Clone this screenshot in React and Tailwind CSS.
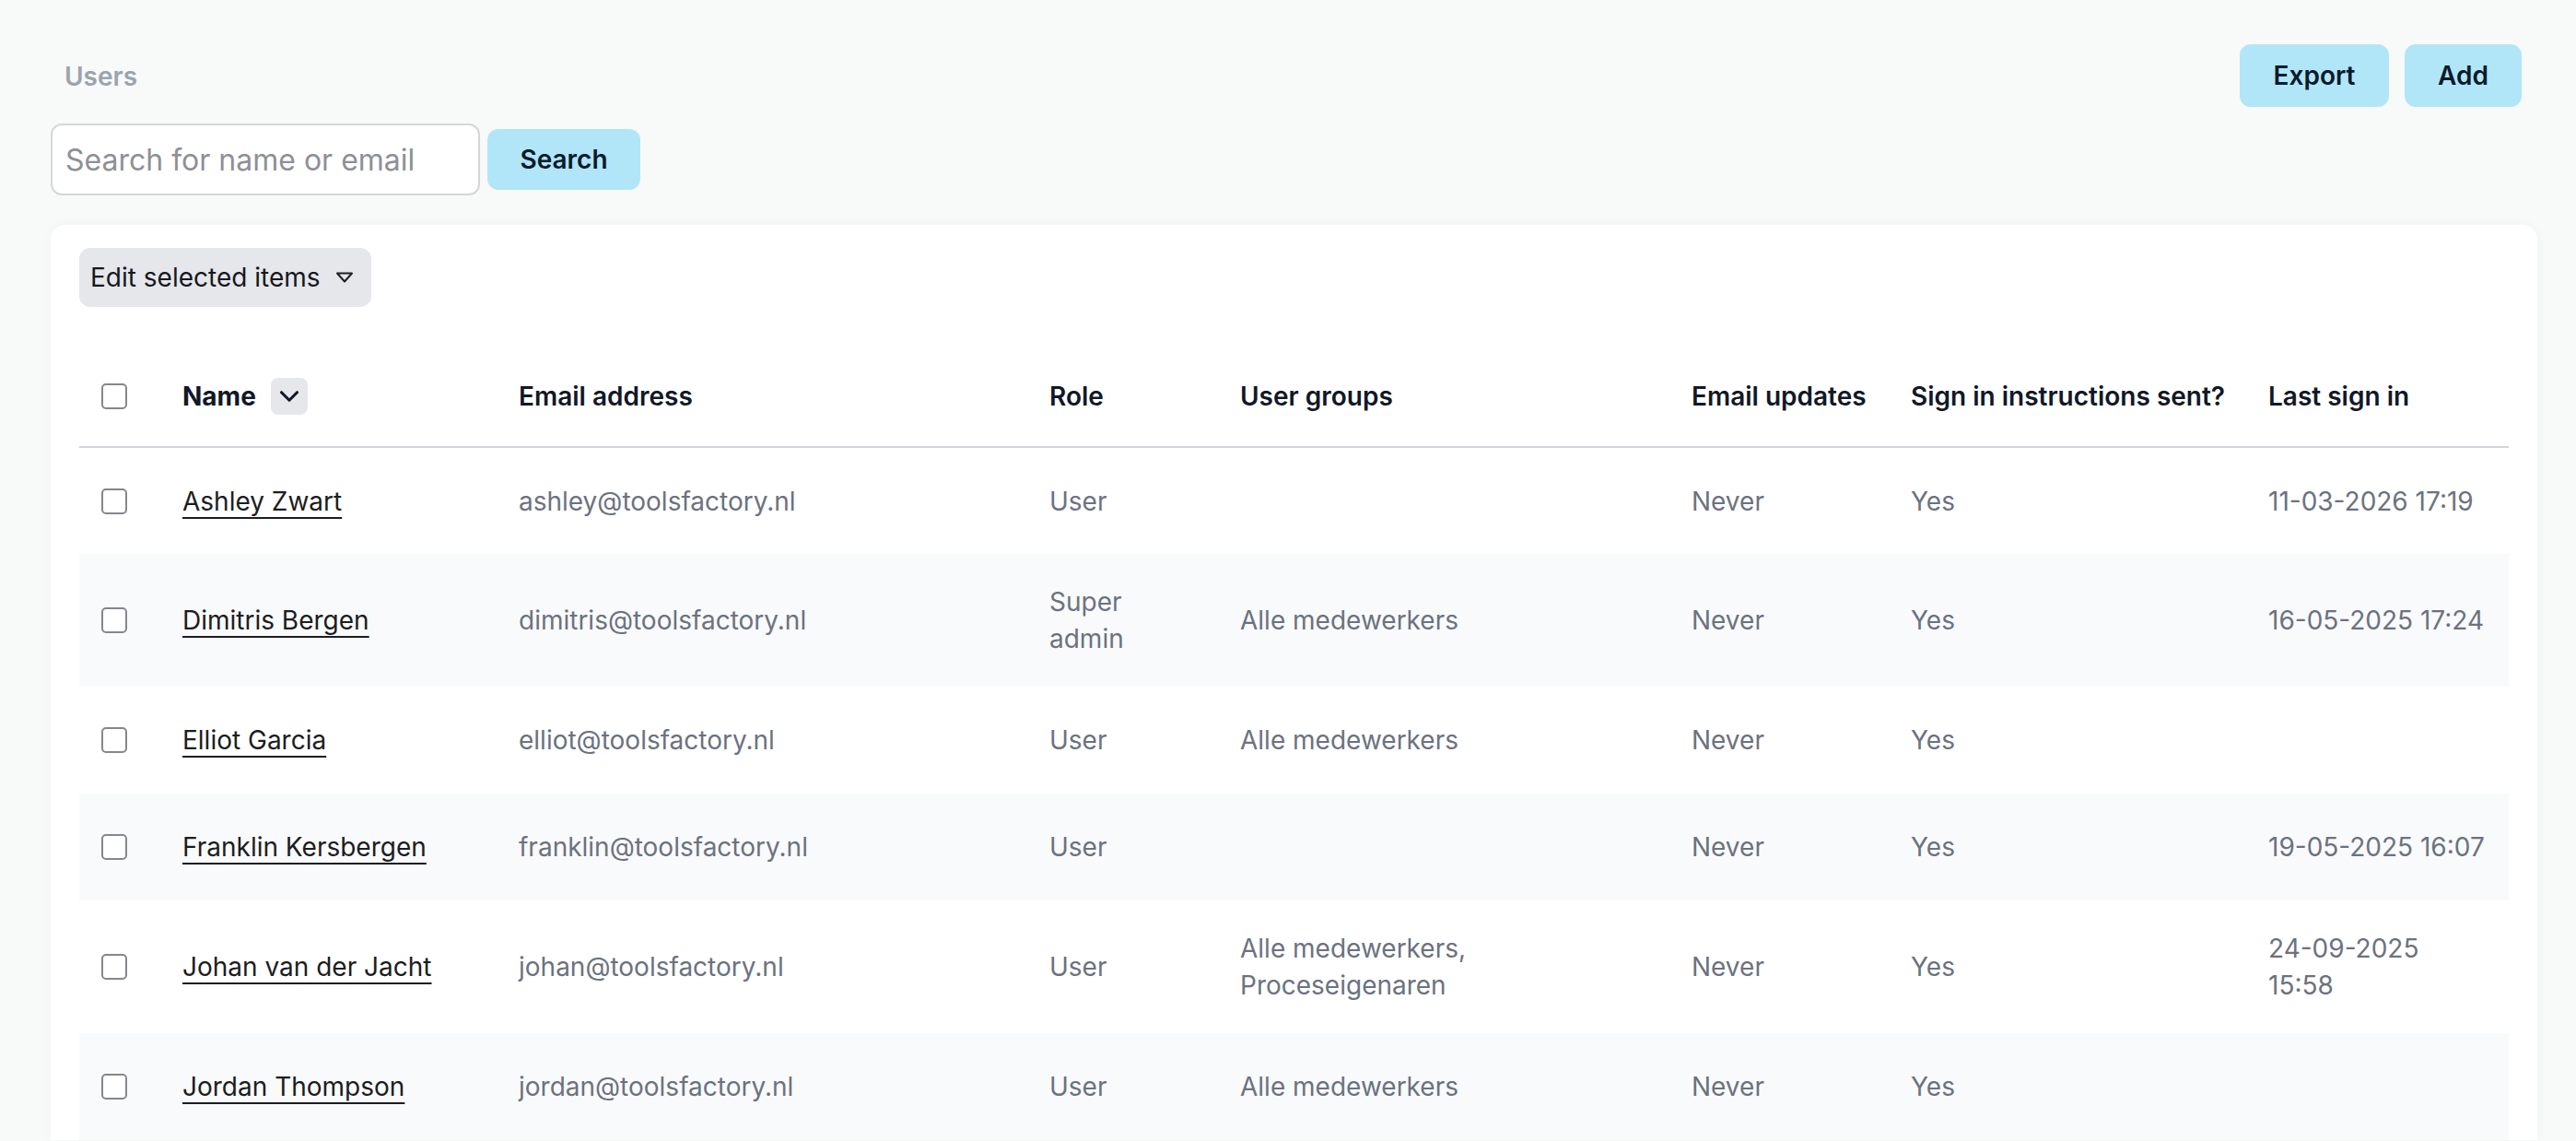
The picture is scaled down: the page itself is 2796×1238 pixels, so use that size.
import { ChevronDown } from "lucide-react";

const users = [
  {
    name: "Ashley Zwart",
    email: "ashley@toolsfactory.nl",
    role: "User",
    groups: [],
    updates: "Never",
    sent: "Yes",
    lastSignIn: ["11-03-2026 17:19"],
  },
  {
    name: "Dimitris Bergen",
    email: "dimitris@toolsfactory.nl",
    role: "Super admin",
    groups: ["Alle medewerkers"],
    updates: "Never",
    sent: "Yes",
    lastSignIn: ["16-05-2025 17:24"],
  },
  {
    name: "Elliot Garcia",
    email: "elliot@toolsfactory.nl",
    role: "User",
    groups: ["Alle medewerkers"],
    updates: "Never",
    sent: "Yes",
    lastSignIn: [],
  },
  {
    name: "Franklin Kersbergen",
    email: "franklin@toolsfactory.nl",
    role: "User",
    groups: [],
    updates: "Never",
    sent: "Yes",
    lastSignIn: ["19-05-2025 16:07"],
  },
  {
    name: "Johan van der Jacht",
    email: "johan@toolsfactory.nl",
    role: "User",
    groups: ["Alle medewerkers,", "Proceseigenaren"],
    updates: "Never",
    sent: "Yes",
    lastSignIn: ["24-09-2025", "15:58"],
  },
  {
    name: "Jordan Thompson",
    email: "jordan@toolsfactory.nl",
    role: "User",
    groups: ["Alle medewerkers"],
    updates: "Never",
    sent: "Yes",
    lastSignIn: [],
  },
];

function Checkbox() {
  return (
    <input
      type="checkbox"
      className="block h-[28px] w-[28px] appearance-none rounded-[5px] border-2 border-[#86868f] bg-white"
    />
  );
}

function Lines({ lines }) {
  return lines.map((line) => (
    <span key={line} className="block whitespace-nowrap">
      {line}
    </span>
  ));
}

function App() {
  return (
    <div className="min-h-screen bg-[#f8f9f9] pl-[55px] pr-[42px] pt-[48px] font-['Inter',sans-serif]">
      <div className="flex items-start justify-between">
        <div>
          <h1 className="mt-[15px] pl-[15px] text-[28px] font-semibold leading-[40px] text-[#9ca3af]">
            Users
          </h1>
          <div className="mt-[31px] flex items-center gap-[8px]">
            <input
              type="text"
              placeholder="Search for name or email"
              className="h-[78px] w-[466px] rounded-[12px] border-2 border-[#d4d6da] bg-white px-[14px] text-[32px] text-gray-900 outline-none placeholder:text-[#8d9097]"
            />
            <button
              type="button"
              className="h-[66px] w-[166px] rounded-[12px] bg-[#b1e6f8] text-[28px] font-semibold text-[#0b1a2b]"
            >
              Search
            </button>
          </div>
        </div>

        <div className="flex gap-[17px] pr-[17px]">
          <button
            type="button"
            className="h-[68px] w-[162px] rounded-[12px] bg-[#b1e6f8] text-[28px] font-semibold text-[#0b1a2b]"
          >
            Export
          </button>
          <button
            type="button"
            className="h-[68px] w-[127px] rounded-[12px] bg-[#b1e6f8] text-[28px] font-semibold text-[#0b1a2b]"
          >
            Add
          </button>
        </div>
      </div>

      <div className="mt-[32px] rounded-t-[16px] bg-white px-[31px] pt-[25px] shadow-[0_0_14px_rgba(0,0,0,0.035)]">
        <button
          type="button"
          className="flex h-[64px] items-center gap-[16px] rounded-[12px] bg-[#e5e7eb] pl-[12px] pr-[19px] text-[28px] text-[#16181d]"
        >
          Edit selected items
          <svg width="20" height="14" viewBox="0 0 20 14" fill="none" aria-hidden="true">
            <path d="M2 2.5h16L10 11.5z" stroke="#1f2023" strokeWidth="2" strokeLinejoin="round" />
          </svg>
        </button>

        <table className="mt-[42px] w-full table-fixed border-collapse">
          <colgroup>
            <col className="w-[88px]" />
            <col className="w-[365px]" />
            <col className="w-[576px]" />
            <col className="w-[207px]" />
            <col className="w-[490px]" />
            <col className="w-[238px]" />
            <col className="w-[388px]" />
            <col className="w-[285px]" />
          </colgroup>
          <thead>
            <tr className="h-[110px] border-b-2 border-[#d1d5db] text-left text-[28px] font-semibold leading-[40px] text-[#111827]">
              <th className="px-[24px]">
                <Checkbox />
              </th>
              <th className="px-[24px]">
                <div className="flex items-center gap-[16px]">
                  Name
                  <span className="grid h-[40px] w-[40px] place-items-center rounded-[8px] bg-[#e5e7eb]">
                    <ChevronDown size={34} strokeWidth={2.2} className="text-[#111827]" />
                  </span>
                </div>
              </th>
              <th className="px-[24px] font-semibold">Email address</th>
              <th className="px-[24px] font-semibold">Role</th>
              <th className="px-[24px] font-semibold">User groups</th>
              <th className="whitespace-nowrap px-[24px] font-semibold">Email updates</th>
              <th className="whitespace-nowrap px-[24px] font-semibold">Sign in instructions sent?</th>
              <th className="px-[24px] font-semibold">Last sign in</th>
            </tr>
          </thead>
          <tbody>
            {users.map((user, i) => (
              <tr
                key={user.email}
                className={`h-[116px] text-[28px] leading-[40px] text-[#6b7280] ${i % 2 === 1 ? "bg-[#f9fafb]" : "bg-white"}`}
              >
                <td className="px-[24px] py-[32px]">
                  <Checkbox />
                </td>
                <td className="px-[24px] py-[32px]">
                  <a
                    href="#"
                    className="whitespace-nowrap text-[#1c1d21] underline decoration-[2px] underline-offset-[7px]"
                  >
                    {user.name}
                  </a>
                </td>
                <td className="px-[24px] py-[32px]">{user.email}</td>
                <td className="px-[24px] py-[32px]">{user.role}</td>
                <td className="px-[24px] py-[32px]">
                  <Lines lines={user.groups} />
                </td>
                <td className="px-[24px] py-[32px]">{user.updates}</td>
                <td className="px-[24px] py-[32px]">{user.sent}</td>
                <td className="px-[24px] py-[32px]">
                  <Lines lines={user.lastSignIn} />
                </td>
              </tr>
            ))}
          </tbody>
        </table>
      </div>
    </div>
  );
}

export default App;
